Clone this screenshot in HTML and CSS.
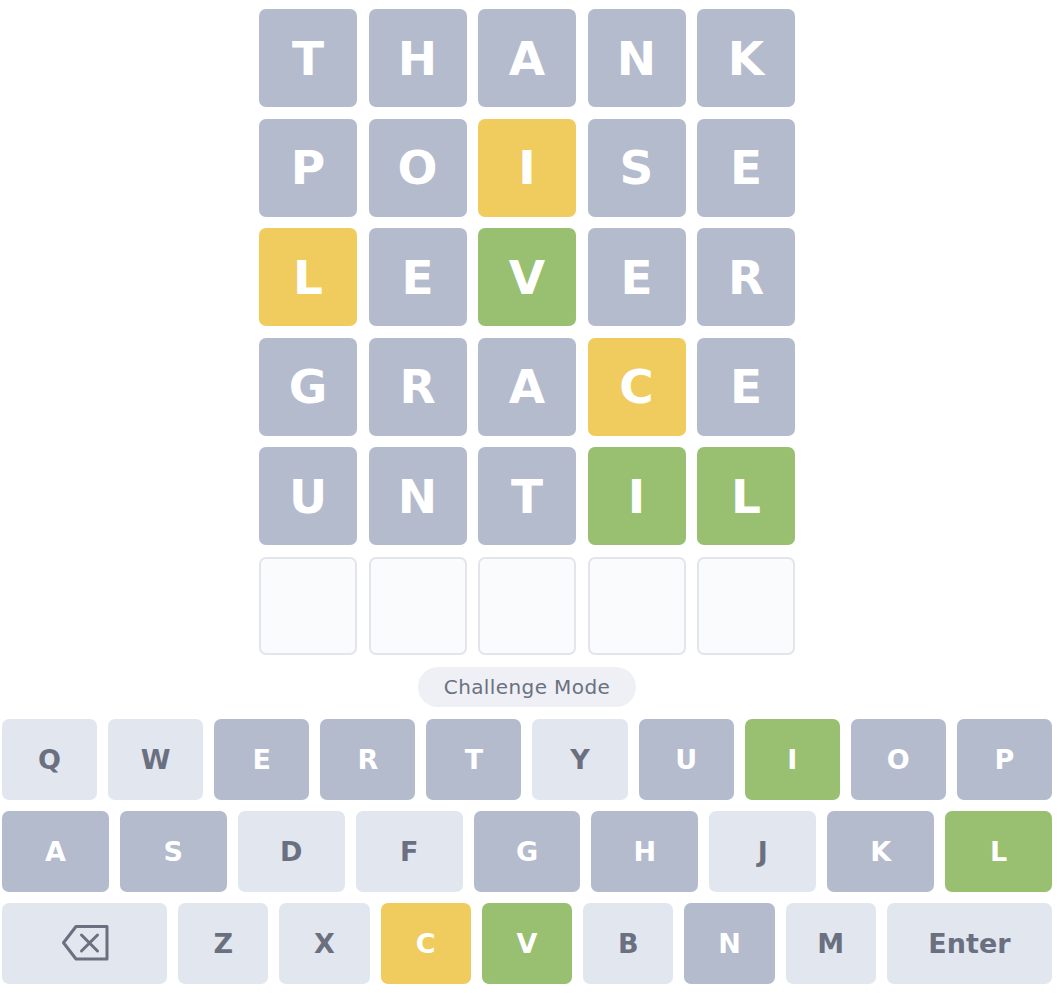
FILE: index.html
```html
<!DOCTYPE html>
<html>
<head>
<meta charset="utf-8">
<link rel="stylesheet" href="styles.css">
</head>
<body>
<div class="app">
  <div class="board">
    <div class="tile gray">T</div><div class="tile gray">H</div><div class="tile gray">A</div><div class="tile gray">N</div><div class="tile gray">K</div>
    <div class="tile gray">P</div><div class="tile gray">O</div><div class="tile yellow">I</div><div class="tile gray">S</div><div class="tile gray">E</div>
    <div class="tile yellow">L</div><div class="tile gray">E</div><div class="tile green">V</div><div class="tile gray">E</div><div class="tile gray">R</div>
    <div class="tile gray">G</div><div class="tile gray">R</div><div class="tile gray">A</div><div class="tile yellow">C</div><div class="tile gray">E</div>
    <div class="tile gray">U</div><div class="tile gray">N</div><div class="tile gray">T</div><div class="tile green">I</div><div class="tile green">L</div>
    <div class="tile empty"></div><div class="tile empty"></div><div class="tile empty"></div><div class="tile empty"></div><div class="tile empty"></div>
  </div>
  <div class="pill">Challenge Mode</div>
  <div class="keyboard">
    <div class="krow r1">
      <div class="key">Q</div><div class="key">W</div><div class="key used">E</div><div class="key used">R</div><div class="key used">T</div><div class="key">Y</div><div class="key used">U</div><div class="key hit">I</div><div class="key used">O</div><div class="key used">P</div>
    </div>
    <div class="krow r2">
      <div class="key used">A</div><div class="key used">S</div><div class="key">D</div><div class="key">F</div><div class="key used">G</div><div class="key used">H</div><div class="key">J</div><div class="key used">K</div><div class="key hit">L</div>
    </div>
    <div class="krow r3">
      <div class="key wide"><svg class="bs" width="50" height="40" viewBox="0 0 50 40"><path d="M16 3.5 H47 V36 H16 L3.5 19.75 Z" fill="none" stroke="#6b7080" stroke-width="3" stroke-linejoin="round"/><path d="M21.5 12 L37.5 28 M37.5 12 L21.5 28" stroke="#6b7080" stroke-width="3" stroke-linecap="round"/></svg></div>
      <div class="key">Z</div><div class="key">X</div><div class="key near">C</div><div class="key hit">V</div><div class="key">B</div><div class="key used">N</div><div class="key">M</div>
      <div class="key wide enter">Enter</div>
    </div>
  </div>
</div>
</body>
</html>
```
FILE: styles.css
```css
html, body {
  margin: 0;
  padding: 0;
  background: #ffffff;
}
.app {
  width: 1054px;
  padding-right: 4px;
  display: flex;
  flex-direction: column;
  align-items: center;
  padding-top: 9px;
  font-family: "DejaVu Sans", "Liberation Sans", sans-serif;
}
.board {
  display: grid;
  grid-template-columns: repeat(5, 98px);
  grid-auto-rows: 98px;
  gap: 11.5px;
}
.tile {
  border-radius: 7px;
  display: flex;
  align-items: center;
  justify-content: center;
  color: #ffffff;
  font-size: 47px;
  font-weight: 700;
  box-sizing: border-box;
}
.gray { background: #b4bbcd; }
.yellow { background: #f0cc5e; }
.green { background: #98c070; }
.empty {
  background: #fafbfd;
  border: 2px solid #e3e5eb;
}
.pill {
  margin-top: 12px;
  height: 40px;
  width: 218px;
  border-radius: 20px;
  background: #eef0f5;
  color: #6b7080;
  font-size: 20px;
  letter-spacing: 0.4px;
  display: flex;
  align-items: center;
  justify-content: center;
}
.keyboard {
  margin-top: 12px;
  width: 1050px;
  display: flex;
  flex-direction: column;
  gap: 11px;
}
.krow {
  display: grid;
  gap: 11px;
  grid-auto-rows: 81px;
}
.r1 { grid-template-columns: repeat(10, 1fr); }
.r2 { grid-template-columns: repeat(9, 1fr); }
.r3 { grid-template-columns: 1.83fr repeat(7, 1fr) 1.83fr; }
.key {
  border-radius: 7px;
  background: #e2e6ef;
  color: #6b7080;
  font-size: 27px;
  font-weight: 700;
  display: flex;
  align-items: center;
  justify-content: center;
}
.key.used { background: #b4bbcd; color: #ffffff; }
.key.hit { background: #98c070; color: #ffffff; }
.key.near { background: #f0cc5e; color: #ffffff; }
.enter { font-size: 27px; }
.bs { display: block; }
```
